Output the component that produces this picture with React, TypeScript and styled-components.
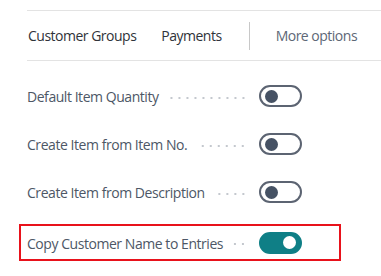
import React from "react";
import styled, { createGlobalStyle } from "styled-components";

const GlobalStyle = createGlobalStyle`
  html, body {
    margin: 0;
    padding: 0;
    background: #ffffff;
  }
  body {
    font-family: "Open Sans", "Noto Sans", "Liberation Sans", sans-serif;
  }
`;

const Page = styled.div`
  width: 381px;
  height: 276px;
  padding-top: 10px;
  box-sizing: border-box;
  overflow: hidden;
`;

const TabBar = styled.nav`
  margin-left: 27px;
  height: 51px;
  box-sizing: border-box;
  border-top: 1px solid #e3e3e3;
  border-bottom: 1px solid #e3e3e3;
  display: flex;
  align-items: center;
  font-size: 14px;
  letter-spacing: -0.5px;
`;

const Tab = styled.span<{ $muted?: boolean }>`
  color: ${(p) => (p.$muted ? "#5d6776" : "#2f3339")};
  margin-right: 25px;
  white-space: nowrap;
  &:first-child {
    margin-left: 1px;
  }
`;

const Divider = styled.span`
  display: block;
  flex-shrink: 0;
  width: 1px;
  height: 28px;
  background: #c8c8c8;
  margin: 0 26px 0 2px;
`;

const List = styled.div`
  padding-top: 11px;
  display: flex;
  flex-direction: column;
`;

const Row = styled.div<{ $highlight?: boolean }>`
  margin-left: 19px;
  width: 322px;
  height: 48px;
  box-sizing: border-box;
  padding: 0 6px;
  display: flex;
  align-items: center;
  border: 2px solid ${(p) => (p.$highlight ? "#e8121b" : "transparent")};
  ${(p) => (p.$highlight ? "height: 37px; margin: 8px 0 0 19px;" : "")}
`;

const Label = styled.span`
  color: #4d5766;
  font-size: 14px;
  letter-spacing: -0.45px;
  white-space: nowrap;
  margin-top: 1px;
`;

const Leader = styled.span`
  flex: 1;
  height: 2px;
  margin: 3px 12px 0 10px;
  background-image: radial-gradient(circle, #c4c8ce 0.8px, transparent 1px);
  background-size: 8px 2px;
  background-repeat: repeat-x;
  background-position: right center;
`;

const Track = styled.span<{ $on?: boolean }>`
  width: 43px;
  height: 22px;
  box-sizing: border-box;
  border-radius: 11px;
  margin-right: 31px;
  flex-shrink: 0;
  display: flex;
  align-items: center;
  padding: 0 4px;
  justify-content: ${(p) => (p.$on ? "flex-end" : "flex-start")};
  background: ${(p) => (p.$on ? "#0f7f86" : "#ffffff")};
  border: 2px solid ${(p) => (p.$on ? "#0f7f86" : "#5c6472")};
`;

const Knob = styled.span<{ $on?: boolean }>`
  width: 13px;
  height: 13px;
  border-radius: 50%;
  background: ${(p) => (p.$on ? "#ffffff" : "#465264")};
`;

const settings = [
  { label: "Default Item Quantity", on: false },
  { label: "Create Item from Item No.", on: false },
  { label: "Create Item from Description", on: false },
  { label: "Copy Customer Name to Entries", on: true, highlight: true },
];

const App: React.FC = () => {
  return (
    <>
      <GlobalStyle />
      <Page>
        <TabBar>
          <Tab>Customer Groups</Tab>
          <Tab>Payments</Tab>
          <Divider />
          <Tab $muted>More options</Tab>
        </TabBar>
        <List>
          {settings.map((s) => (
            <Row key={s.label} $highlight={s.highlight}>
              <Label>{s.label}</Label>
              <Leader />
              <Track $on={s.on}>
                <Knob $on={s.on} />
              </Track>
            </Row>
          ))}
        </List>
      </Page>
    </>
  );
};

export default App;
